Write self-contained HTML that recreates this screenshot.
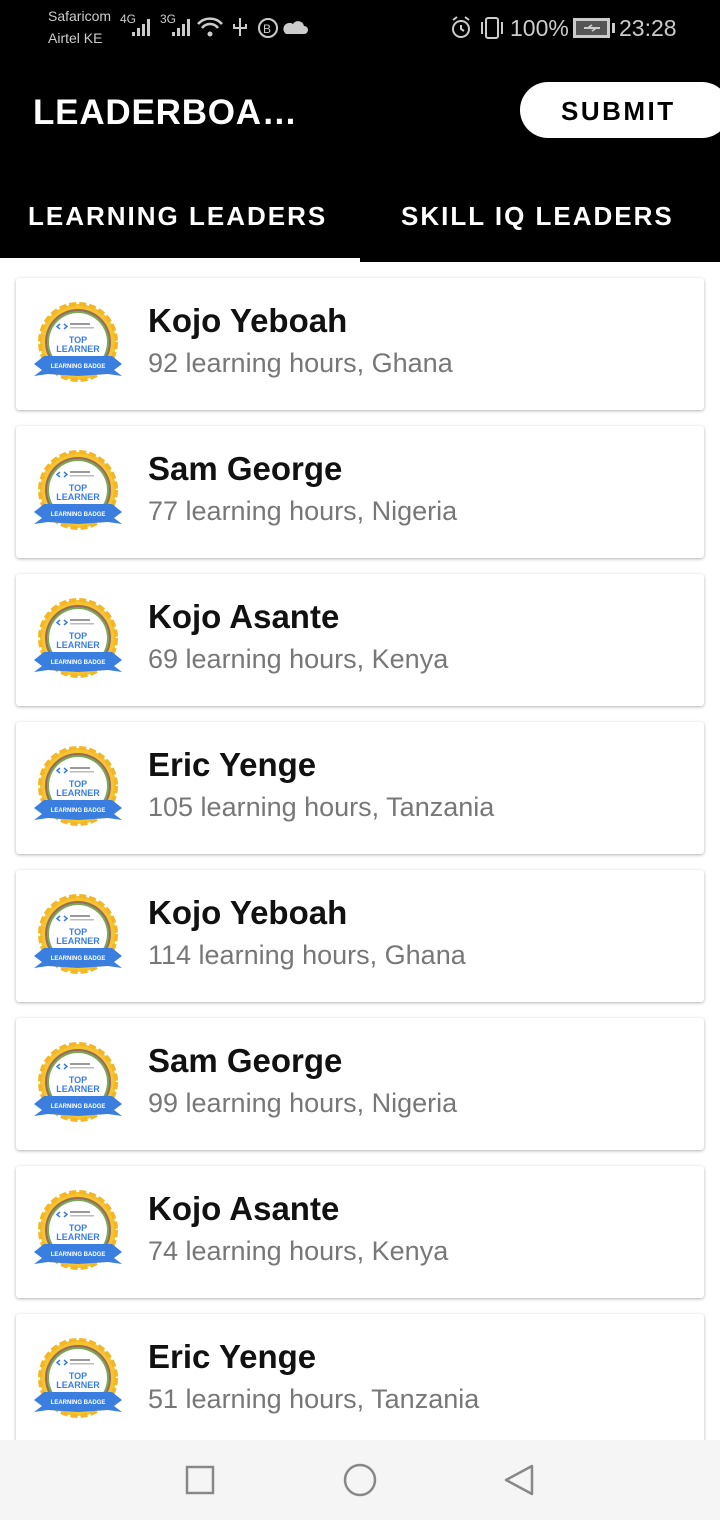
<!DOCTYPE html>
<html><head><meta charset="utf-8">
<style>
*{margin:0;padding:0;box-sizing:border-box}
body{width:720px;height:1520px;background:#fff;font-family:"Liberation Sans",Roboto,sans-serif;position:relative;overflow:hidden}
.top{position:absolute;left:0;top:0;width:720px;height:262px;background:#000}
.sb{position:absolute;color:#ccc}
.title{position:absolute;left:33px;top:93px;color:#fff;font-size:35px;font-weight:bold;letter-spacing:0.8px}
.submit{position:absolute;left:520px;top:82px;width:210px;height:56px;background:#fff;border-radius:28px;font-size:26px;font-weight:bold;letter-spacing:2.5px;color:#000;padding:14px 0 0 41px}
.tab{position:absolute;top:201px;color:#fff;font-size:26px;font-weight:bold;letter-spacing:2px}
.ind{position:absolute;left:0;top:258px;width:360px;height:4px;background:#fff}
.card{position:absolute;left:16px;width:688px;height:132px;background:#fff;border-radius:3px;box-shadow:0 1px 3px rgba(0,0,0,.3)}
.card svg{position:absolute;left:16px;top:24px}
.name{position:absolute;left:132px;top:24px;font-size:33px;font-weight:bold;color:#111}
.sub{position:absolute;left:132px;top:70px;font-size:27px;color:#777}
.nav{position:absolute;left:0;top:1440px;width:720px;height:80px;background:#f5f5f5}
</style></head><body>
<div class="top"></div>
<div class="sb" style="left:48px;top:8px;font-size:14px">Safaricom</div>
<div class="sb" style="left:48px;top:30px;font-size:14px">Airtel KE</div>
<div class="sb" style="left:120px;top:12px;font-size:12px">4G</div>
<svg class="sb" style="left:128px;top:16px" width="180" height="22" viewBox="0 0 180 22" fill="#ccc">
<rect x="4" y="16" width="3" height="4"/><rect x="9" y="12" width="3" height="8"/><rect x="14" y="8" width="3" height="12"/><rect x="19" y="3" width="3" height="17"/>
<rect x="44" y="16" width="3" height="4"/><rect x="49" y="12" width="3" height="8"/><rect x="54" y="8" width="3" height="12"/><rect x="59" y="3" width="3" height="17"/>
<path d="M70 8a16 16 0 0 1 24 0" stroke="#ccc" stroke-width="2.5" fill="none"/><path d="M74 12a10 10 0 0 1 16 0" stroke="#ccc" stroke-width="2.5" fill="none"/><circle cx="82" cy="18" r="2.5"/>
<path d="M112 2v18M106 8v4h12v-4" stroke="#ccc" stroke-width="2" fill="none"/>
<circle cx="140" cy="12" r="9" stroke="#ccc" stroke-width="2" fill="none"/><text x="135" y="17" font-size="12" fill="#ccc" font-family="Liberation Sans">B</text>
<path d="M158 18h18a4 4 0 0 0 0-8a6 6 0 0 0-11-2a5 5 0 0 0-7 10z"/>
</svg>
<div class="sb" style="left:160px;top:12px;font-size:12px">3G</div>
<svg class="sb" style="left:450px;top:16px" width="60" height="24" viewBox="0 0 60 24" fill="none" stroke="#ccc" stroke-width="2"><circle cx="11" cy="13" r="8"/><path d="M11 9v4l3 2M3 4l4-3M19 4l-4-3"/><rect x="36" y="2" width="12" height="20" rx="2"/><path d="M32 6v12M52 6v12"/></svg>
<div class="sb" style="left:510px;top:15px;font-size:23px">100%</div>
<svg class="sb" style="left:572px;top:17px" width="44" height="22"><rect x="1" y="1" width="37" height="20" fill="#ccc"/><rect x="4" y="4" width="31" height="14" fill="#555"/><rect x="40" y="6" width="3" height="10" fill="#ccc"/><path d="M12 11h16M20 8l-4 3h8l-4 3" stroke="#ccc" stroke-width="2"/></svg>
<div class="sb" style="left:619px;top:15px;font-size:23px">23:28</div>
<div class="title">LEADERBOA…</div>
<div class="submit">SUBMIT</div>
<div class="tab" style="left:28px">LEARNING LEADERS</div>
<div class="tab" style="left:401px">SKILL IQ LEADERS</div>
<div class="ind"></div>

<div class="card" style="top:278px"><svg width="92" height="86" viewBox="0 0 92 86"><circle cx="46" cy="40" r="38" fill="#f7c431" stroke="#f2b626" stroke-width="4" stroke-dasharray="7 3"/><circle cx="46" cy="40" r="33" fill="#9a6a5a"/><circle cx="46" cy="40" r="31" fill="#7aaa5a"/><circle cx="46" cy="40" r="29" fill="#fff"/><path d="M28 22l-3 2.5 3 2.5M32 22l3 2.5-3 2.5" stroke="#3a7ee0" stroke-width="1.5" fill="none"/><rect x="38" y="21" width="20" height="2" fill="#999"/><rect x="38" y="25" width="24" height="1.5" fill="#bbb"/><text x="46" y="41" text-anchor="middle" font-size="9" font-weight="bold" fill="#3a7ee0" font-family="Liberation Sans">TOP</text><text x="46" y="50" text-anchor="middle" font-size="9" font-weight="bold" fill="#3a7ee0" font-family="Liberation Sans">LEARNER</text><path d="M2 62l10-8 68 0 10 8-8 6 8 6-14-2-30 2-30-2-14 2 8-6z" fill="#3a7ee0"/><text x="46" y="66" text-anchor="middle" font-size="6" font-weight="bold" fill="#fff" font-family="Liberation Sans">LEARNING BADGE</text></svg><div class="name">Kojo Yeboah</div><div class="sub">92 learning hours, Ghana</div></div>
<div class="card" style="top:426px"><svg width="92" height="86" viewBox="0 0 92 86"><circle cx="46" cy="40" r="38" fill="#f7c431" stroke="#f2b626" stroke-width="4" stroke-dasharray="7 3"/><circle cx="46" cy="40" r="33" fill="#9a6a5a"/><circle cx="46" cy="40" r="31" fill="#7aaa5a"/><circle cx="46" cy="40" r="29" fill="#fff"/><path d="M28 22l-3 2.5 3 2.5M32 22l3 2.5-3 2.5" stroke="#3a7ee0" stroke-width="1.5" fill="none"/><rect x="38" y="21" width="20" height="2" fill="#999"/><rect x="38" y="25" width="24" height="1.5" fill="#bbb"/><text x="46" y="41" text-anchor="middle" font-size="9" font-weight="bold" fill="#3a7ee0" font-family="Liberation Sans">TOP</text><text x="46" y="50" text-anchor="middle" font-size="9" font-weight="bold" fill="#3a7ee0" font-family="Liberation Sans">LEARNER</text><path d="M2 62l10-8 68 0 10 8-8 6 8 6-14-2-30 2-30-2-14 2 8-6z" fill="#3a7ee0"/><text x="46" y="66" text-anchor="middle" font-size="6" font-weight="bold" fill="#fff" font-family="Liberation Sans">LEARNING BADGE</text></svg><div class="name">Sam George</div><div class="sub">77 learning hours, Nigeria</div></div>
<div class="card" style="top:574px"><svg width="92" height="86" viewBox="0 0 92 86"><circle cx="46" cy="40" r="38" fill="#f7c431" stroke="#f2b626" stroke-width="4" stroke-dasharray="7 3"/><circle cx="46" cy="40" r="33" fill="#9a6a5a"/><circle cx="46" cy="40" r="31" fill="#7aaa5a"/><circle cx="46" cy="40" r="29" fill="#fff"/><path d="M28 22l-3 2.5 3 2.5M32 22l3 2.5-3 2.5" stroke="#3a7ee0" stroke-width="1.5" fill="none"/><rect x="38" y="21" width="20" height="2" fill="#999"/><rect x="38" y="25" width="24" height="1.5" fill="#bbb"/><text x="46" y="41" text-anchor="middle" font-size="9" font-weight="bold" fill="#3a7ee0" font-family="Liberation Sans">TOP</text><text x="46" y="50" text-anchor="middle" font-size="9" font-weight="bold" fill="#3a7ee0" font-family="Liberation Sans">LEARNER</text><path d="M2 62l10-8 68 0 10 8-8 6 8 6-14-2-30 2-30-2-14 2 8-6z" fill="#3a7ee0"/><text x="46" y="66" text-anchor="middle" font-size="6" font-weight="bold" fill="#fff" font-family="Liberation Sans">LEARNING BADGE</text></svg><div class="name">Kojo Asante</div><div class="sub">69 learning hours, Kenya</div></div>
<div class="card" style="top:722px"><svg width="92" height="86" viewBox="0 0 92 86"><circle cx="46" cy="40" r="38" fill="#f7c431" stroke="#f2b626" stroke-width="4" stroke-dasharray="7 3"/><circle cx="46" cy="40" r="33" fill="#9a6a5a"/><circle cx="46" cy="40" r="31" fill="#7aaa5a"/><circle cx="46" cy="40" r="29" fill="#fff"/><path d="M28 22l-3 2.5 3 2.5M32 22l3 2.5-3 2.5" stroke="#3a7ee0" stroke-width="1.5" fill="none"/><rect x="38" y="21" width="20" height="2" fill="#999"/><rect x="38" y="25" width="24" height="1.5" fill="#bbb"/><text x="46" y="41" text-anchor="middle" font-size="9" font-weight="bold" fill="#3a7ee0" font-family="Liberation Sans">TOP</text><text x="46" y="50" text-anchor="middle" font-size="9" font-weight="bold" fill="#3a7ee0" font-family="Liberation Sans">LEARNER</text><path d="M2 62l10-8 68 0 10 8-8 6 8 6-14-2-30 2-30-2-14 2 8-6z" fill="#3a7ee0"/><text x="46" y="66" text-anchor="middle" font-size="6" font-weight="bold" fill="#fff" font-family="Liberation Sans">LEARNING BADGE</text></svg><div class="name">Eric Yenge</div><div class="sub">105 learning hours, Tanzania</div></div>
<div class="card" style="top:870px"><svg width="92" height="86" viewBox="0 0 92 86"><circle cx="46" cy="40" r="38" fill="#f7c431" stroke="#f2b626" stroke-width="4" stroke-dasharray="7 3"/><circle cx="46" cy="40" r="33" fill="#9a6a5a"/><circle cx="46" cy="40" r="31" fill="#7aaa5a"/><circle cx="46" cy="40" r="29" fill="#fff"/><path d="M28 22l-3 2.5 3 2.5M32 22l3 2.5-3 2.5" stroke="#3a7ee0" stroke-width="1.5" fill="none"/><rect x="38" y="21" width="20" height="2" fill="#999"/><rect x="38" y="25" width="24" height="1.5" fill="#bbb"/><text x="46" y="41" text-anchor="middle" font-size="9" font-weight="bold" fill="#3a7ee0" font-family="Liberation Sans">TOP</text><text x="46" y="50" text-anchor="middle" font-size="9" font-weight="bold" fill="#3a7ee0" font-family="Liberation Sans">LEARNER</text><path d="M2 62l10-8 68 0 10 8-8 6 8 6-14-2-30 2-30-2-14 2 8-6z" fill="#3a7ee0"/><text x="46" y="66" text-anchor="middle" font-size="6" font-weight="bold" fill="#fff" font-family="Liberation Sans">LEARNING BADGE</text></svg><div class="name">Kojo Yeboah</div><div class="sub">114 learning hours, Ghana</div></div>
<div class="card" style="top:1018px"><svg width="92" height="86" viewBox="0 0 92 86"><circle cx="46" cy="40" r="38" fill="#f7c431" stroke="#f2b626" stroke-width="4" stroke-dasharray="7 3"/><circle cx="46" cy="40" r="33" fill="#9a6a5a"/><circle cx="46" cy="40" r="31" fill="#7aaa5a"/><circle cx="46" cy="40" r="29" fill="#fff"/><path d="M28 22l-3 2.5 3 2.5M32 22l3 2.5-3 2.5" stroke="#3a7ee0" stroke-width="1.5" fill="none"/><rect x="38" y="21" width="20" height="2" fill="#999"/><rect x="38" y="25" width="24" height="1.5" fill="#bbb"/><text x="46" y="41" text-anchor="middle" font-size="9" font-weight="bold" fill="#3a7ee0" font-family="Liberation Sans">TOP</text><text x="46" y="50" text-anchor="middle" font-size="9" font-weight="bold" fill="#3a7ee0" font-family="Liberation Sans">LEARNER</text><path d="M2 62l10-8 68 0 10 8-8 6 8 6-14-2-30 2-30-2-14 2 8-6z" fill="#3a7ee0"/><text x="46" y="66" text-anchor="middle" font-size="6" font-weight="bold" fill="#fff" font-family="Liberation Sans">LEARNING BADGE</text></svg><div class="name">Sam George</div><div class="sub">99 learning hours, Nigeria</div></div>
<div class="card" style="top:1166px"><svg width="92" height="86" viewBox="0 0 92 86"><circle cx="46" cy="40" r="38" fill="#f7c431" stroke="#f2b626" stroke-width="4" stroke-dasharray="7 3"/><circle cx="46" cy="40" r="33" fill="#9a6a5a"/><circle cx="46" cy="40" r="31" fill="#7aaa5a"/><circle cx="46" cy="40" r="29" fill="#fff"/><path d="M28 22l-3 2.5 3 2.5M32 22l3 2.5-3 2.5" stroke="#3a7ee0" stroke-width="1.5" fill="none"/><rect x="38" y="21" width="20" height="2" fill="#999"/><rect x="38" y="25" width="24" height="1.5" fill="#bbb"/><text x="46" y="41" text-anchor="middle" font-size="9" font-weight="bold" fill="#3a7ee0" font-family="Liberation Sans">TOP</text><text x="46" y="50" text-anchor="middle" font-size="9" font-weight="bold" fill="#3a7ee0" font-family="Liberation Sans">LEARNER</text><path d="M2 62l10-8 68 0 10 8-8 6 8 6-14-2-30 2-30-2-14 2 8-6z" fill="#3a7ee0"/><text x="46" y="66" text-anchor="middle" font-size="6" font-weight="bold" fill="#fff" font-family="Liberation Sans">LEARNING BADGE</text></svg><div class="name">Kojo Asante</div><div class="sub">74 learning hours, Kenya</div></div>
<div class="card" style="top:1314px"><svg width="92" height="86" viewBox="0 0 92 86"><circle cx="46" cy="40" r="38" fill="#f7c431" stroke="#f2b626" stroke-width="4" stroke-dasharray="7 3"/><circle cx="46" cy="40" r="33" fill="#9a6a5a"/><circle cx="46" cy="40" r="31" fill="#7aaa5a"/><circle cx="46" cy="40" r="29" fill="#fff"/><path d="M28 22l-3 2.5 3 2.5M32 22l3 2.5-3 2.5" stroke="#3a7ee0" stroke-width="1.5" fill="none"/><rect x="38" y="21" width="20" height="2" fill="#999"/><rect x="38" y="25" width="24" height="1.5" fill="#bbb"/><text x="46" y="41" text-anchor="middle" font-size="9" font-weight="bold" fill="#3a7ee0" font-family="Liberation Sans">TOP</text><text x="46" y="50" text-anchor="middle" font-size="9" font-weight="bold" fill="#3a7ee0" font-family="Liberation Sans">LEARNER</text><path d="M2 62l10-8 68 0 10 8-8 6 8 6-14-2-30 2-30-2-14 2 8-6z" fill="#3a7ee0"/><text x="46" y="66" text-anchor="middle" font-size="6" font-weight="bold" fill="#fff" font-family="Liberation Sans">LEARNING BADGE</text></svg><div class="name">Eric Yenge</div><div class="sub">51 learning hours, Tanzania</div></div>

<div class="nav"><svg width="720" height="80"><rect x="187" y="27" width="26" height="26" fill="none" stroke="#888" stroke-width="2.5"/><circle cx="360" cy="40" r="15" fill="none" stroke="#888" stroke-width="2.5"/><path d="M532 26L506 40L532 54Z" fill="none" stroke="#888" stroke-width="2.5" stroke-linejoin="round"/></svg></div>
</body></html>
